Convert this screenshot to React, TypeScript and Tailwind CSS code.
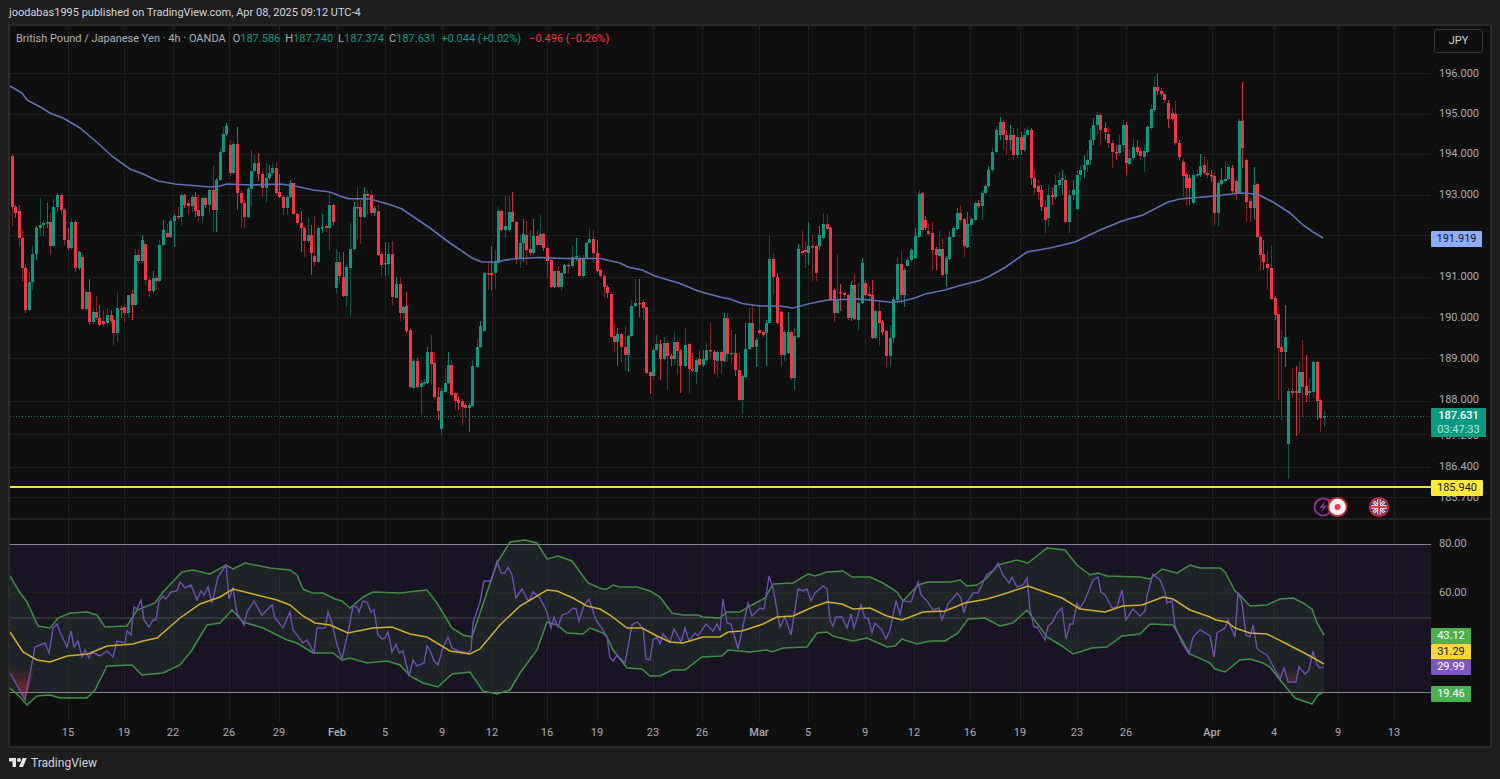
import React from 'react';

// [x, open, close, high, low], all in screen pixels
const CANDLES: number[][] = [
  [12,156,207,154,226],[15,207,213,205,218],[19,211,238,205,247],[22,238,268,229,282],[25,268,310,265,313],[29,310,282,272,311],[32,282,254,245,290],[36,254,228,226,260],[40,228,225,198,236],[43,225,223,220,236],
  [47,223,222,203,228],[50,222,246,213,255],[53,246,207,199,246],[57,207,195,193,212],[61,195,210,194,215],[64,210,240,208,245],[68,240,248,228,250],[71,248,222,218,250],[75,222,268,220,272],[79,268,252,251,270],
  [82,257,309,255,310],[86,309,292,291,311],[89,292,322,279,325],[93,322,312,308,325],[96,312,318,296,320],[99,318,325,305,326],[103,321,324,310,327],[107,323,315,308,326],[111,315,321,310,323],[113,320,333,316,345],
  [117,333,308,292,342],[121,308,310,306,318],[124,307,313,305,322],[128,313,295,295,318],[132,294,305,290,320],[135,305,255,249,306],[138,255,261,249,263],[142,261,240,235,263],[145,244,280,243,285],[149,280,291,278,297],
  [153,291,278,271,293],[156,278,281,276,290],[159,281,245,240,282],[163,245,230,220,246],[167,233,237,224,238],[170,237,221,218,238],[174,221,216,214,247],[178,216,217,207,220],[181,217,195,194,225],[184,195,205,194,208],
  [188,203,206,200,215],[192,206,197,195,212],[195,197,211,192,217],[198,210,216,195,222],[202,216,198,197,223],[205,198,205,197,208],[209,205,190,189,214],[213,190,210,166,232],[216,210,180,178,232],[220,180,152,148,181],
  [223,152,134,127,153],[226,134,126,123,136],[230,145,173,140,176],[233,173,144,141,174],[237,144,193,127,210],[241,193,203,190,228],[244,203,217,200,228],[248,217,189,187,218],[251,189,171,150,207],[254,171,163,155,172],
  [258,163,174,153,181],[262,174,188,172,197],[266,188,178,163,203],[269,178,173,165,180],[272,173,168,163,175],[276,168,193,162,195],[279,192,197,174,198],[283,197,208,195,215],[287,208,197,195,215],[290,197,183,180,198],
  [293,183,214,183,215],[297,214,223,213,225],[301,223,228,211,252],[304,228,241,226,257],[308,241,235,217,243],[311,235,253,225,275],[314,256,262,216,267],[318,262,228,226,262],[322,228,227,214,233],[326,226,228,224,232],
  [329,228,205,193,251],[333,205,222,204,225],[336,288,262,249,293],[339,262,276,252,284],[343,277,296,252,297],[346,296,267,264,307],[350,268,249,223,316],[354,249,207,202,250],[357,207,208,187,240],[360,207,217,200,244],
  [364,217,194,187,218],[367,194,196,190,215],[371,195,213,190,216],[374,213,208,206,216],[378,211,255,204,256],[381,254,265,252,276],[385,264,263,242,276],[388,264,254,242,275],[392,254,297,241,305],[396,298,284,277,298],
  [400,284,313,277,321],[403,313,307,305,320],[406,306,331,292,333],[410,330,387,328,388],[413,388,361,358,390],[417,361,387,358,388],[421,387,383,380,415],[424,383,382,379,386],[427,383,352,347,384],[431,352,364,335,385],
  [434,363,397,352,400],[438,397,411,387,420],[441,429,391,388,436],[445,392,383,368,393],[448,383,365,352,384],[451,365,395,360,396],[455,393,401,392,410],[458,400,403,396,410],[462,401,407,399,425],[465,405,408,403,418],
  [469,408,405,403,432],[472,406,366,360,407],[477,367,347,339,368],[480,347,326,321,348],[484,331,273,272,332],[488,273,274,261,290],[491,273,275,246,290],[495,273,262,250,289],[498,263,211,207,264],[501,211,230,210,231],
  [505,230,226,196,238],[509,230,212,196,232],[512,212,222,192,222],[516,222,259,221,264],[520,259,243,235,268],[523,243,234,219,262],[526,235,250,221,265],[530,249,253,230,256],[533,253,236,219,254],[537,236,245,230,245],
  [540,245,234,215,246],[543,234,248,233,251],[547,248,261,246,278],[551,260,287,259,288],[554,287,271,271,288],[558,271,287,266,288],[561,287,273,272,291],[564,273,265,264,274],[568,265,266,263,273],[572,266,257,245,268],
  [576,257,256,238,261],[579,258,276,255,277],[583,276,258,255,278],[586,258,243,242,259],[589,243,239,228,244],[593,239,253,230,263],[597,253,271,240,272],[600,270,276,268,278],[604,276,287,274,298],[607,287,293,285,298],
  [611,294,337,292,338],[614,336,342,323,352],[617,342,334,328,366],[621,334,347,333,362],[625,347,355,326,371],[628,355,336,335,372],[631,336,306,300,337],[635,306,303,279,307],[639,303,304,279,317],[643,302,308,300,320],
  [646,307,373,306,374],[650,372,376,372,394],[653,376,350,348,380],[656,350,344,335,351],[660,344,359,340,380],[664,359,343,337,360],[667,343,356,340,390],[671,356,359,354,366],[674,359,342,332,365],[677,342,351,340,375],
  [680,351,366,349,393],[685,366,345,328,367],[689,344,369,343,393],[692,369,370,353,372],[696,372,360,358,384],[699,359,365,350,366],[703,365,359,350,367],[706,360,350,343,361],[710,350,351,323,358],[714,352,360,350,374],
  [717,361,352,350,377],[721,352,361,350,374],[724,361,318,313,362],[727,318,354,313,362],[731,354,353,330,364],[735,353,370,334,376],[739,370,400,353,401],[742,400,376,375,414],[745,377,349,323,378],[749,349,323,308,350],
  [752,323,347,305,348],[756,347,340,338,367],[759,330,333,305,335],[763,332,335,330,337],[766,333,323,320,366],[769,323,259,236,324],[773,259,277,253,295],[777,277,323,273,324],[781,312,355,310,367],[784,355,332,330,361],
  [788,353,332,312,354],[791,332,378,330,380],[794,378,336,328,390],[798,337,249,244,338],[802,251,253,231,255],[805,250,252,242,268],[808,253,246,222,265],[812,246,247,235,281],[816,246,273,244,281],[819,246,235,226,250],
  [823,238,224,213,240],[827,224,229,214,230],[830,228,300,227,301],[834,290,313,288,322],[837,313,300,255,314],[840,292,293,284,311],[844,293,295,292,300],[848,295,318,293,320],[851,318,285,281,321],[854,285,319,274,320],
  [858,320,303,283,331],[862,303,263,258,304],[865,283,295,280,296],[869,294,296,286,300],[872,295,338,280,339],[875,338,311,310,340],[879,311,323,300,346],[882,322,332,320,335],[886,331,356,330,367],[890,356,338,325,367],
  [893,338,299,297,343],[897,300,264,257,304],[901,264,295,251,304],[904,295,270,268,307],[907,266,260,258,267],[911,260,250,248,262],[915,258,236,228,259],[919,237,194,190,238],[922,193,230,192,231],[925,220,228,216,230],
  [928,231,234,224,235],[932,233,250,222,271],[936,249,255,247,270],[939,256,249,231,257],[942,249,275,238,277],[946,274,258,256,287],[949,259,237,231,260],[953,237,228,226,238],[957,229,213,208,230],[960,213,220,205,222],
  [964,219,246,218,257],[967,247,224,212,248],[971,225,219,217,236],[975,220,203,201,221],[978,203,206,200,208],[982,206,193,191,220],[985,193,186,184,194],[988,186,170,166,187],[992,170,152,148,172],[996,152,130,126,154],
  [1000,135,122,117,140],[1003,122,135,120,150],[1006,135,140,130,155],[1010,140,135,125,150],[1013,135,155,128,160],[1017,155,137,128,158],[1021,137,150,132,155],[1024,150,135,128,152],[1027,135,130,127,137],[1031,130,178,128,185],
  [1034,178,188,170,195],[1038,186,192,180,200],[1041,190,207,185,211],[1045,207,220,200,233],[1048,218,195,185,227],[1052,195,197,188,205],[1055,197,185,175,200],[1059,185,180,172,190],[1062,180,178,170,195],[1065,180,222,175,223],
  [1069,222,195,190,233],[1073,195,190,180,200],[1077,209,175,170,210],[1080,175,170,165,182],[1084,170,165,155,178],[1087,165,160,150,172],[1090,160,140,128,165],[1093,140,125,118,145],[1097,125,115,112,135],[1100,115,130,113,145],
  [1105,128,132,122,140],[1108,134,143,127,148],[1112,143,152,140,168],[1116,152,153,145,160],[1119,153,145,135,155],[1123,145,125,120,152],[1126,125,163,122,175],[1129,164,158,150,165],[1133,158,147,139,160],[1137,147,152,140,155],
  [1140,151,156,148,160],[1144,157,151,145,172],[1147,152,127,125,153],[1151,128,109,105,130],[1154,110,87,76,112],[1157,87,91,74,95],[1161,91,94,88,97],[1164,94,100,94,103],[1168,103,119,100,128],[1172,113,119,108,122],
  [1175,114,143,101,145],[1179,143,157,140,160],[1183,162,176,158,196],[1186,174,188,172,206],[1189,178,188,175,205],[1193,203,175,172,205],[1197,175,174,170,178],[1200,175,166,154,177],[1204,165,173,157,175],[1207,173,175,160,178],
  [1211,175,176,170,182],[1214,176,213,172,225],[1218,213,183,181,227],[1221,184,180,168,186],[1225,181,179,162,183],[1228,179,167,164,180],[1232,168,191,165,193],[1236,181,193,179,200],[1239,193,121,119,194],[1242,121,148,82,168],
  [1246,160,202,158,222],[1250,201,208,198,222],[1254,208,185,167,220],[1257,184,237,182,238],[1260,237,255,235,270],[1263,254,262,240,270],[1267,264,268,250,289],[1271,268,299,245,300],[1275,298,315,296,320],[1278,314,348,306,400],
  [1281,347,352,330,420],[1285,352,337,305,367],[1288,444,391,388,479],[1292,391,393,368,398],[1296,391,393,366,436],[1299,393,372,361,433],[1302,372,387,340,417],[1306,386,395,355,402],[1309,393,391,378,402],[1313,392,362,360,398],
  [1317,362,401,361,420],[1320,400,418,398,432],[1324,417,416,411,427],
];

const EMA = '10,86 22,93 27,100 42,108 50,113 63,118 80,128 100,145 113,157 130,169 143,174 158,181 175,184 210,187 220,186 227,184 250,185 280,184 295,186 313,190 330,192 340,196 348,198.6 370,199 388,204 402,209 430,228 450,243 472,258 482,262 495,262 512,259 540,257.5 565,258.5 600,258.5 620,263 628,267 642,270 655,276 680,283.5 698,291 720,297 730,299 742,303.5 760,306 780,306 793,308 808,304 827,300 860,299 880,301 892,302.5 903,301 915,298 925,294 945,290 960,285.5 980,280.5 990,276 1005,267.5 1027,252 1050,248 1075,242 1100,230 1122,221 1143,215 1168,202 1180,199 1215,196 1240,193 1257,194 1273,202 1290,213 1303,225 1313,232 1323,238';

const UPPER = '10,576 20,593 27,602 38,626 50,628 58,618 70,613 87,612 97,615 105,627 127,626 137,610 155,603 163,592 182,572 193,570 210,574 226,565 233,569 245,563 270,568 290,570 297,575 303,589 312,593 323,593 335,599 342,601 350,608 363,597 373,592 400,593 417,591 427,590 437,603 452,628 463,635 472,637 480,613 497,563 510,542 525,540 537,543 547,559 558,556 572,561 588,583 602,589 607,589 613,585 620,587 637,587 650,591 660,597 672,613 683,615 698,615 703,617 720,618 727,612 740,612 750,606 765,598 773,584 793,583 808,574 815,576 827,572 843,571 852,577 870,577 883,583 897,592 903,601 918,585 928,582 950,582 960,580 967,586 977,585 987,578 998,565 1017,560 1028,563 1047,548 1065,550 1077,565 1090,575 1098,573 1107,576 1140,577 1150,579 1162,569 1177,573 1190,565 1200,568 1220,568 1225,572 1235,591 1238,593 1250,606 1267,605 1280,599 1293,598 1303,603 1312,609 1317,623 1324,635';
const LOWER = '10,688 20,697 27,705 37,696 50,695 60,698 87,698 95,690 107,666 132,665 142,675 163,673 180,665 192,650 207,625 220,623 232,610 243,622 263,628 287,640 297,643 313,653 333,653 342,660 350,658 367,663 387,661 400,665 410,676 423,683 438,687 452,674 470,672 483,691 497,694 510,690 520,673 537,650 547,622 557,625 567,633 583,634 590,628 603,633 607,637 613,650 627,668 642,669 650,676 660,676 672,670 685,670 702,657 722,656 728,650 750,652 767,650 772,652 783,648 807,647 817,633 827,632 833,636 853,641 867,638 887,647 895,646 902,639 917,644 930,641 945,641 958,633 968,619 985,618 1000,626 1013,623 1027,610 1047,637 1062,646 1073,654 1092,648 1107,647 1122,636 1140,634 1150,624 1173,625 1190,654 1210,663 1215,669 1225,672 1240,660 1250,659 1263,663 1270,667 1280,680 1295,698 1312,704 1318,695 1324,692';
const RSI_MA = '10,632 23,652 37,660 50,662 67,656 88,654 107,646 133,644 143,641 157,638 180,618 200,604 220,597 233,589 253,594 277,600 290,605 303,616 315,623 330,625 348,633 373,628 392,627 410,634 427,637 450,651 470,654 480,649 500,625 520,606 547,590 557,591 573,598 587,606 600,609 610,615 627,628 642,628 657,636 670,642 683,643 703,637 720,637 728,632 742,631 763,624 777,617 793,616 813,607 827,602 842,604 853,609 870,608 887,616 902,620 923,612 945,611 965,603 987,599 1007,593 1028,586 1062,598 1080,609 1105,612 1123,606 1142,605 1163,597 1173,599 1190,610 1210,617 1216,620 1227,622 1235,628 1250,633 1267,634 1287,644 1310,656 1324,664';
const RSI = '10,673 13,678 25,700 35,647 45,643 49,653 53,628 57,624 60,632 67,647 71,631 74,647 78,641 82,657 85,650 89,658 92,652 100,656 107,651 113,657 117,641 125,643 127,631 131,635 134,607 137,609 141,600 144,620 149,627 153,620 156,620 159,601 163,596 166,599 171,592 177,591 180,582 185,588 191,585 197,600 201,591 204,595 208,587 212,603 218,577 226,565 229,599 233,588 237,613 244,625 247,612 254,601 262,615 272,605 275,618 283,628 290,612 293,630 303,643 307,640 314,653 317,628 325,628 328,612 332,623 337,645 342,659 349,628 353,606 357,607 359,612 363,601 367,602 371,612 374,610 378,635 382,639 385,638 388,632 392,652 396,644 399,653 403,651 409,676 413,660 417,666 424,663 427,646 430,650 434,661 438,665 443,648 448,637 452,648 458,651 468,653 471,650 473,623 480,602 484,581 491,581 497,561 501,573 505,573 508,567 512,575 516,598 522,589 527,599 529,601 533,592 540,598 547,612 551,628 554,617 558,627 562,615 568,613 573,608 576,609 579,621 584,605 589,599 596,620 603,630 607,637 610,658 613,661 617,655 625,663 632,625 637,622 643,628 646,659 650,660 653,640 657,637 660,644 663,634 670,642 674,629 681,642 685,628 689,641 695,633 698,636 706,624 713,631 717,624 720,631 723,599 727,623 731,624 738,649 748,603 752,616 760,608 764,609 769,576 773,588 780,627 785,617 791,635 798,589 803,591 807,589 811,601 815,593 823,586 827,589 830,620 833,626 836,617 842,617 847,628 851,614 854,628 861,605 865,618 868,618 872,633 875,623 882,630 886,639 890,630 896,601 900,614 903,601 911,602 918,582 921,595 927,601 933,610 939,608 942,620 948,604 957,593 961,598 964,613 967,602 973,593 978,593 987,574 993,571 998,563 1003,575 1009,583 1012,577 1017,587 1023,585 1027,578 1030,610 1034,627 1037,627 1045,640 1048,626 1052,623 1057,613 1062,608 1066,639 1070,624 1073,624 1077,603 1080,608 1085,600 1093,580 1098,577 1101,592 1105,595 1112,608 1117,607 1122,590 1126,620 1133,609 1140,616 1145,611 1147,596 1153,574 1160,580 1165,592 1167,603 1172,601 1175,626 1182,643 1189,654 1193,637 1200,630 1210,636 1214,657 1217,633 1225,628 1228,620 1235,637 1238,592 1242,603 1246,635 1250,637 1253,625 1257,648 1260,651 1267,655 1280,679 1284,668 1288,682 1296,682 1299,667 1305,674 1309,670 1313,651 1317,665 1320,668 1324,667';

const BAND = `${UPPER} ${LOWER.split(' ').reverse().join(' ')}`;

const V_GRID = [68, 124, 173, 229, 279, 337, 385, 442, 492, 547, 597, 653, 702, 759, 808, 865, 914, 970, 1020, 1077, 1126, 1212, 1274, 1338, 1394];
const H_GRID = [73, 114, 154, 195, 235, 277, 317, 358, 401, 434, 467, 497];

const PRICE_TICKS = [
  { y: 74, label: '196.000' }, { y: 114, label: '195.000' }, { y: 154, label: '194.000' }, { y: 195, label: '193.000' },
  { y: 277, label: '191.000' }, { y: 318, label: '190.000' }, { y: 359, label: '189.000' }, { y: 400, label: '188.000' },
  { y: 436, label: '187.200' }, { y: 467, label: '186.400' }, { y: 498, label: '185.700' },
];

const TIME_TICKS = [
  ['15', 68], ['19', 124], ['22', 173], ['26', 229], ['29', 279], ['Feb', 337], ['5', 385], ['9', 442], ['12', 492], ['16', 547],
  ['19', 597], ['23', 653], ['26', 702], ['Mar', 759], ['5', 808], ['9', 865], ['12', 914], ['16', 970], ['19', 1020], ['23', 1077],
  ['26', 1126], ['Apr', 1212], ['4', 1274], ['9', 1338], ['13', 1394],
] as const;

const Candles = () => (
  <g>
    {CANDLES.map(([x, o, c, h, l], i) => {
      const up = c < o;
      const color = up ? '#089981' : '#f23645';
      const top = Math.min(o, c);
      return (
        <g key={i}>
          <line x1={x + 0.5} x2={x + 0.5} y1={h} y2={l} stroke={color} strokeOpacity={i % 3 === 1 ? 0.85 : 0.5} />
          <rect x={x - 1} y={top} width={3} height={Math.max(Math.abs(c - o), 1.5)} fill={color} />
        </g>
      );
    })}
  </g>
);

const GridLines = ({ ys, top, bottom }: { ys: number[]; top: number; bottom: number }) => (
  <g stroke="#1e1e1e">
    {V_GRID.map((x) => <line key={x} x1={x + 0.5} x2={x + 0.5} y1={top} y2={bottom} />)}
    {ys.map((y) => <line key={y} x1={10} x2={1431} y1={y + 0.5} y2={y + 0.5} />)}
  </g>
);

const EventIcons = () => (
  <g>
    {/* lightning */}
    <circle cx={1323} cy={507} r={8.5} fill="#0f0f0f" stroke="#8e2b9e" strokeWidth={2} />
    <path d="M1325 501l-5.5 7h3.5l-2 5 6-7.5h-3.5z" fill="#8e2b9e" />
    {/* record */}
    <rect x={1328} y={499} width={5} height={5} fill="#c62a35" />
    <circle cx={1337.5} cy={507} r={9.2} fill="#f5f5f5" stroke="#c62a35" strokeWidth={1.8} />
    <circle cx={1337.5} cy={507} r={3} fill="#f23645" />
    {/* UK flag */}
    <clipPath id="uk"><circle cx={1379} cy={507} r={8} /></clipPath>
    <g clipPath="url(#uk)">
      <rect x={1370} y={498} width={18} height={18} fill="#3f51a5" />
      <path d="M1370 498l18 18M1388 498l-18 18" stroke="#f0d5d8" strokeWidth={3} />
      <path d="M1370 498l18 18M1388 498l-18 18" stroke="#d8414f" strokeWidth={1} />
      <path d="M1379 498v18M1370 507h18" stroke="#f5e6e8" strokeWidth={3.5} />
      <path d="M1379 498v18M1370 507h18" stroke="#d8414f" strokeWidth={2} />
    </g>
    <circle cx={1379} cy={507} r={9.2} fill="none" stroke="#c62a35" strokeWidth={1.8} />
  </g>
);

const MainPane = () => (
  <svg width={1421} height={492} viewBox="10 26 1421 492" className="block">
    <GridLines ys={H_GRID} top={26} bottom={518} />
    <Candles />
    <polyline points={EMA} fill="none" stroke="#5f71b4" strokeWidth={1.6} />
    <line x1={10} x2={1431} y1={416.5} y2={416.5} stroke="#089981" strokeOpacity={0.7} strokeDasharray="1 2" />
    <line x1={10} x2={1431} y1={487} y2={487} stroke="#f1e04a" strokeWidth={2} />
    <EventIcons />
  </svg>
);

const RsiPane = () => (
  <svg width={1421} height={202} viewBox="10 520 1421 202" className="block">
    <defs>
      <linearGradient id="oversold" gradientUnits="userSpaceOnUse" x1={0} x2={0} y1={668} y2={700}>
        <stop offset="0" stopColor="#f23645" stopOpacity={0} />
        <stop offset="1" stopColor="#f23645" stopOpacity={0.55} />
      </linearGradient>
    </defs>
    <rect x={10} y={544} width={1421} height={148} fill="#181423" />
    <GridLines ys={[592, 642]} top={520} bottom={722} />
    <polygon points={BAND} fill="#4caf50" fillOpacity={0.1} />
    <polygon points="10,668 10,673 13,678 25,700 35,668" fill="url(#oversold)" />
    <polygon points="1268,668 1280,679 1284,668 1288,682 1296,682 1299,668" fill="url(#oversold)" />
    <line x1={10} x2={1431} y1={544.5} y2={544.5} stroke="#85858f" />
    <line x1={10} x2={1431} y1={618} y2={618} stroke="#3c3b42" strokeWidth={1.5} />
    <line x1={10} x2={1431} y1={692.5} y2={692.5} stroke="#85858f" />
    <polyline points={UPPER} fill="none" stroke="#3f8f45" strokeWidth={1.5} />
    <polyline points={LOWER} fill="none" stroke="#3f8f45" strokeWidth={1.5} />
    <polyline points={RSI} fill="none" stroke="#6f4fb0" strokeWidth={1.4} />
    <polyline points={RSI_MA} fill="none" stroke="#d2ad2e" strokeWidth={1.5} />
  </svg>
);

const AxisTag = ({ className, children }: { className: string; children: React.ReactNode }) => (
  <div className={`absolute left-0 flex flex-col items-center justify-center rounded-[1px] ${className}`}>
    {children}
  </div>
);

const Legend = () => (
  <div className="absolute left-[6px] top-[5px] flex items-center whitespace-nowrap text-[11px] leading-4 text-[#aeb1ba]">
    <span>British Pound / Japanese Yen · 4h · OANDA</span>
    <span className="ml-[7px]">O<span className="text-[#089981]">187.586</span></span>
    <span className="ml-[5px]">H<span className="text-[#089981]">187.740</span></span>
    <span className="ml-[5px]">L<span className="text-[#089981]">187.374</span></span>
    <span className="ml-[5px]">C<span className="text-[#089981]">187.631</span></span>
    <span className="ml-[5px] text-[#089981]">+0.044 (+0.02%)</span>
    <span className="ml-[8px] text-[#f23645]">−0.496 (−0.26%)</span>
  </div>
);

const PriceAxis = () => (
  <div className="relative h-[492px] w-[59px] text-[11px] text-[#a9acb4]">
    {PRICE_TICKS.map((t) => (
      <span key={t.label} className="absolute left-[8px] -translate-y-1/2 leading-4" style={{ top: t.y - 26 }}>{t.label}</span>
    ))}
    <div className="absolute left-[3px] top-[3px] flex h-[24px] w-[49px] items-center justify-center rounded-[3px] border border-[#363636] bg-[#0f0f0f] text-[#d1d4dc]">JPY</div>
    <AxisTag className="top-[205px] h-[16px] w-[51px] bg-[#8fadfb] text-[#131722]">191.919</AxisTag>
    <AxisTag className="top-[382px] h-[29px] w-[55px] bg-[#089981] leading-[14px]">
      <span className="font-medium text-white">187.631</span>
      <span className="text-[#b9e3db]">03:47:33</span>
    </AxisTag>
    <AxisTag className="top-[454px] h-[16px] w-[52px] bg-[#ffeb3b] text-[#131722]">185.940</AxisTag>
  </div>
);

const RsiAxis = () => (
  <div className="relative h-[202px] w-[59px] text-[11px] text-[#a9acb4]">
    <span className="absolute left-[8px] top-[16px] leading-4">80.00</span>
    <span className="absolute left-[8px] top-[65px] leading-4">60.00</span>
    <AxisTag className="top-[108px] h-[16px] w-[40px] bg-[#4caf50] text-white">43.12</AxisTag>
    <AxisTag className="top-[124px] h-[16px] w-[40px] bg-[#fdd835] text-[#131722]">31.29</AxisTag>
    <AxisTag className="top-[139px] h-[16px] w-[40px] bg-[#7e57c2] text-white">29.99</AxisTag>
    <AxisTag className="top-[166px] h-[16px] w-[40px] bg-[#4caf50] text-white">19.46</AxisTag>
  </div>
);

const TimeAxis = () => (
  <div className="relative h-[24px] w-full text-[11px] leading-4 text-[#a9acb4]">
    {TIME_TICKS.map(([label, x]) => (
      <span key={`${label}-${x}`} className={`absolute top-[3px] -translate-x-1/2 ${label.length === 3 ? 'font-medium' : ''}`} style={{ left: x - 10 }}>
        {label}
      </span>
    ))}
  </div>
);

export default function App() {
  return (
    <div className="flex h-screen w-full flex-col bg-[#1e1e1e] font-['Roboto',sans-serif]">
      <header className="flex h-[24px] shrink-0 items-center pl-[9px] pt-[3px] text-[11px] text-[#d1d4dc]">
        joodabas1995 published on TradingView.com, Apr 08, 2025 09:12 UTC-4
      </header>

      <main className="ml-[8px] h-[724px] w-[1484px] shrink-0 border-2 border-[#2a2a2a] bg-[#0f0f0f]">
        <div className="relative flex">
          <MainPane />
          <PriceAxis />
          <Legend />
        </div>
        <div className="h-[2px] bg-[#232323]" />
        <div className="flex">
          <RsiPane />
          <RsiAxis />
        </div>
        <TimeAxis />
      </main>

      <footer className="flex flex-1 items-center gap-[4px] pl-[9px] pb-[1px] text-[12px] text-[#d1d4dc]">
        <svg width="18" height="14" viewBox="0 0 36 28" fill="#e4e4e4" aria-hidden="true">
          <path d="M14 22H7V11H0V4h14v18zM28 22h-8l7.5-18h8L28 22z" />
          <circle cx="20" cy="8" r="4" />
        </svg>
        <span>TradingView</span>
      </footer>
    </div>
  );
}
